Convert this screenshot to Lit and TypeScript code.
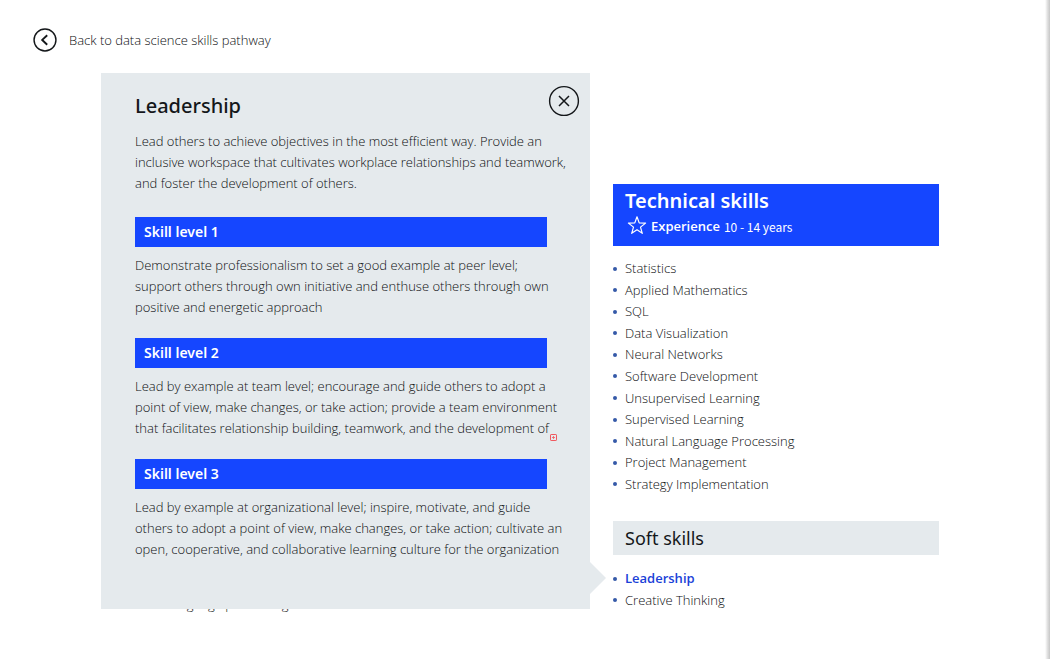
import { LitElement, html, css } from "lit";
import { customElement, property } from "lit/decorators.js";

interface Level {
  title: string;
  lines: string[];
}

const intro = [
  "Lead others to achieve objectives in the most efficient way. Provide an",
  "inclusive workspace that cultivates workplace relationships and teamwork,",
  "and foster the development of others.",
];

const levels: Level[] = [
  {
    title: "Skill level 1",
    lines: [
      "Demonstrate professionalism to set a good example at peer level;",
      "support others through own initiative and enthuse others through own",
      "positive and energetic approach",
    ],
  },
  {
    title: "Skill level 2",
    lines: [
      "Lead by example at team level; encourage and guide others to adopt a",
      "point of view, make changes, or take action; provide a team environment",
      "that facilitates relationship building, teamwork, and the development of",
    ],
  },
  {
    title: "Skill level 3",
    lines: [
      "Lead by example at organizational level; inspire, motivate, and guide",
      "others to adopt a point of view, make changes, or take action; cultivate an",
      "open, cooperative, and collaborative learning culture for the organization",
    ],
  },
];

const technical = [
  "Statistics",
  "Applied Mathematics",
  "SQL",
  "Data Visualization",
  "Neural Networks",
  "Software Development",
  "Unsupervised Learning",
  "Supervised Learning",
  "Natural Language Processing",
  "Project Management",
  "Strategy Implementation",
];

const soft = ["Leadership", "Creative Thinking"];

const breakLines = (lines: string[]) =>
  lines.map((line, i) => (i ? html`<br />${line}` : line));

@customElement("skill-list")
export class SkillList extends LitElement {
  @property({ attribute: false }) items: string[] = [];
  @property() current = "";

  static styles = css`
    :host {
      display: grid;
    }
    .list {
      list-style: none;
      margin: 0;
      padding: 0;
      display: grid;
      grid-auto-rows: 1fr;
    }
    .item {
      display: flex;
      align-items: center;
      gap: 8px;
      line-height: 21px;
    }
    .item::before {
      content: "";
      width: 4px;
      height: 4px;
      border-radius: 50%;
      background: #3559a8;
    }
    .link {
      color: inherit;
      text-decoration: none;
    }
    .current {
      color: #1a41d8;
      font-weight: 600;
    }
  `;

  render() {
    return html`<ul class="list">
      ${this.items.map(
        (name) => html`<li class="item">
          <a class="link ${name === this.current ? "current" : ""}" href="#">${name}</a>
        </li>`
      )}
    </ul>`;
  }
}

@customElement("app-root")
export class AppRoot extends LitElement {
  static styles = css`
    :host {
      display: block;
      position: relative;
      box-sizing: border-box;
      min-height: 100vh;
      padding: 28px 111px 48px 101px;
      background: #fff;
      color: #0c0e10;
      font: 300 13px/21px "Open Sans", "Noto Sans", sans-serif;
    }
    :host::after {
      content: "";
      position: absolute;
      top: 0;
      right: 0;
      bottom: 4px;
      width: 5px;
      background: linear-gradient(to right, #fff, #e0e0e0 50%, #c6c6c6);
    }
    .back {
      display: flex;
      align-items: center;
      gap: 12px;
      width: fit-content;
      margin-left: -68px;
      color: inherit;
      text-decoration: none;
    }
    .icon {
      display: block;
      fill: none;
      stroke: #14171a;
    }
    .columns {
      display: grid;
      grid-template-columns: 3fr 2fr;
      align-items: start;
      gap: 23px;
      margin-top: 21px;
    }
    .stage {
      display: grid;
    }
    .behind,
    .card {
      grid-area: 1 / 1;
    }
    .behind {
      align-self: end;
      margin: 0 0 -6px 18px;
    }
    .card {
      position: relative;
      padding: 20px 20px 49px 34px;
      background: #e5eaed;
    }
    .card::after {
      content: "";
      position: absolute;
      left: 100%;
      bottom: 15px;
      border: 16px solid transparent;
      border-right-width: 0;
      border-left-color: #e5eaed;
    }
    .title,
    .bar,
    .heading,
    .soft {
      font-family: "Noto Sans", "Open Sans", sans-serif;
    }
    .title {
      margin: 0;
      color: #14171a;
      font-size: 20px;
      line-height: 26px;
      font-weight: 500;
    }
    .close {
      position: absolute;
      top: 12px;
      right: 10px;
      padding: 0;
      border: 0;
      background: none;
      cursor: pointer;
    }
    .text {
      margin: 0;
      white-space: nowrap;
    }
    .intro {
      margin: 12px 0 23px;
    }
    .level + .level {
      margin-top: 20px;
    }
    .bar {
      margin: 0 23px 8px 0;
      padding: 4px 9px;
      background: #1546ff;
      color: #fff;
      font-size: 14px;
      line-height: 22px;
      font-weight: 600;
    }
    .overset {
      position: absolute;
      right: 33px;
      bottom: 168px;
    }
    .side {
      padding-top: 111px;
    }
    .banner {
      padding: 4px 12px 9px;
      background: #1546ff;
      color: #fff;
    }
    .heading {
      margin: 0 0 1px;
      font-size: 20px;
      line-height: 26px;
      font-weight: 600;
    }
    .years {
      display: flex;
      align-items: center;
      gap: 4px;
      font-weight: 400;
    }
    .years .icon {
      stroke: #fff;
    }
    .years strong {
      font-weight: 600;
    }
    .span {
      font-family: "Noto Sans CJK SC", "Open Sans", sans-serif;
      font-size: 12px;
    }
    .technical {
      min-height: 237px;
      margin: 12px 0 26px;
    }
    .other {
      min-height: 43px;
    }
    .soft {
      margin: 0 0 13px;
      padding: 4px 12px;
      background: #e5eaed;
      color: #14171a;
      font-size: 18px;
      line-height: 26px;
      font-weight: 400;
    }
  `;

  render() {
    return html`
      <a class="back" href="#">
        <svg class="icon" width="24" height="24" viewBox="0 0 25 25" aria-hidden="true">
          <circle cx="12.5" cy="12.5" r="11.4" stroke-width="1.5" />
          <path d="M14.8 7.5 9.6 12.4l5.2 5" stroke-width="2" />
        </svg>
        Back to data science skills pathway
      </a>
      <main class="columns">
        <div class="stage">
          <div class="behind">Natural Language processing</div>
          <article class="card">
            <h1 class="title">Leadership</h1>
            <button class="close" type="button" aria-label="Close">
              <svg class="icon" width="32" height="32" viewBox="0 0 32 32" aria-hidden="true">
                <circle cx="16" cy="16" r="14.4" stroke-width="1.4" />
                <path d="m11 11 10 10M21 11 11 21" stroke-width="1.5" />
              </svg>
            </button>
            <p class="text intro">${breakLines(intro)}</p>
            ${levels.map(
              (level) => html`<section class="level">
                <h2 class="bar">${level.title}</h2>
                <p class="text">${breakLines(level.lines)}</p>
              </section>`
            )}
            <svg class="overset" width="7" height="7" viewBox="0 0 7 7" fill="none" stroke="#f0595f" aria-hidden="true">
              <rect x=".5" y=".5" width="6" height="6" rx=".6" />
              <path d="M3.5 2v3M2 3.5h3" stroke-width=".8" />
            </svg>
          </article>
        </div>
        <aside class="side">
          <header class="banner">
            <h2 class="heading">Technical skills</h2>
            <div class="years">
              <svg class="icon" width="22" height="22" viewBox="0 0 22 22" aria-hidden="true">
                <path d="m12 1.8 2.2 6.1 6.4.2-5.1 4 1.8 6.2-5.3-3.6-5.3 3.6 1.8-6.2-5.1-4 6.4-.2z" stroke-width="1.2" stroke-linejoin="round" />
              </svg>
              <strong>Experience</strong>
              <span class="span">10 - 14 years</span>
            </div>
          </header>
          <skill-list class="technical" .items=${technical}></skill-list>
          <h2 class="soft">Soft skills</h2>
          <skill-list class="other" .items=${soft} current="Leadership"></skill-list>
        </aside>
      </main>
    `;
  }
}
